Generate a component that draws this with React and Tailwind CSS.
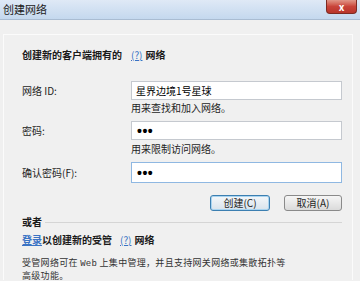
export default function App() {
  const label = "w-[109px] shrink-0 text-[10px] leading-[12px] text-[#1e1e1e]";
  const input = "w-[211px] bg-white border px-[4px] flex items-center text-[10px] text-black";
  const dots = (
    <span className="font-['Liberation_Sans',sans-serif] text-[14px] leading-none tracking-[0.5px] font-bold pl-[1px]">•••</span>
  );

  return (
    <div className="w-[360px] h-[281px] overflow-hidden bg-[#f0f0f0] font-['Noto_Sans_CJK_SC','Noto_Sans',sans-serif] text-black">
      {/* title bar */}
      <div className="h-[20px] flex items-start bg-gradient-to-b from-[#dfe9f6] to-[#c4d8ee] border-b border-[#a9bcd2]">
        <span className="pl-[3px] pt-[2px] text-[11px] leading-[15px] text-[#202020]">创建网络</span>
        <div className="ml-auto mr-[3px] w-[31px] h-[14px] rounded-b-[4px] border border-t-0 border-[#7d2a22] bg-gradient-to-b from-[#e09688] via-[#c9443a] to-[#b8352a] flex items-center justify-center">
          <span className="text-white text-[10px] font-bold leading-none">x</span>
        </div>
      </div>

      {/* body */}
      <div className="ml-[3px] w-[350px] mt-[14px] h-[246px] border-t border-l border-r border-[#fbfbfb] pl-[18px]">
        <div className="mt-[14px] flex items-center text-[10px] leading-[12px] font-bold text-[#1a1a1a]">
          <span>创建新的客户端拥有的</span>
          <span className="ml-[9px] text-[#3a73c4] font-normal underline">(?)</span>
          <span className="ml-[3px]">网络</span>
        </div>

        <div className="mt-[20px] flex items-center">
          <span className={label}>网络 ID:</span>
          <div className={`${input} h-[19px] border-[#c5c9cf]`}>
            <span className="leading-[12px]">星界边境1号星球</span>
          </div>
        </div>
        <div className="mt-[2px] pl-[109px] text-[10px] leading-[12px] text-[#1e1e1e]">用来查找和加入网络。</div>

        <div className="mt-[7px] flex items-center">
          <span className={label}>密码:</span>
          <div className={`${input} h-[19px] border-[#c5c9cf]`}>{dots}</div>
        </div>
        <div className="mt-[3px] pl-[109px] text-[10px] leading-[12px] text-[#1e1e1e]">用来限制访问网络。</div>

        <div className="mt-[7px] flex items-center">
          <span className={label}>确认密码(F):</span>
          <div className={`${input} h-[21px] border-[#8fb8e2]`}>{dots}</div>
        </div>

        <div className="mt-[12px] flex justify-end gap-[14px] pr-[10px]">
          <button className="w-[60px] h-[16px] rounded-[3px] border border-[#3c7fb1] bg-gradient-to-b from-[#f4f7fa] to-[#d8e3ec] text-[10px] leading-none text-[#1e1e1e] shadow-[inset_0_0_0_1px_#a9d4f0]">
            创建(C)
          </button>
          <button className="w-[58px] h-[16px] rounded-[3px] border border-[#8a8a8a] bg-gradient-to-b from-[#f6f6f6] to-[#dadada] text-[10px] leading-none text-[#1e1e1e]">
            取消(A)
          </button>
        </div>

        <div className="mt-[5px] flex items-center pr-[10px]">
          <span className="text-[10px] leading-[12px] font-bold text-[#1a1a1a]">或者</span>
          <div className="ml-[3px] flex-1 h-px bg-[#d5d5d5]" />
        </div>

        <div className="mt-[6px] flex items-center text-[10px] leading-[12px] font-bold text-[#1a1a1a]">
          <span className="text-[#3a73c4] underline">登录</span>
          <span>以创建新的受管</span>
          <span className="ml-[8px] text-[#3a73c4] font-normal underline">(?)</span>
          <span className="ml-[3px]">网络</span>
        </div>

        <div className="mt-[11px] text-[9px] leading-[11px] tracking-[0.3px] text-[#333]">
          <div>
            受管网络可在 <span className="font-['Liberation_Mono',monospace]">Web</span> 上集中管理，并且支持网关网络或集散拓扑等
          </div>
          <div>高级功能。</div>
        </div>
      </div>
    </div>
  );
}
